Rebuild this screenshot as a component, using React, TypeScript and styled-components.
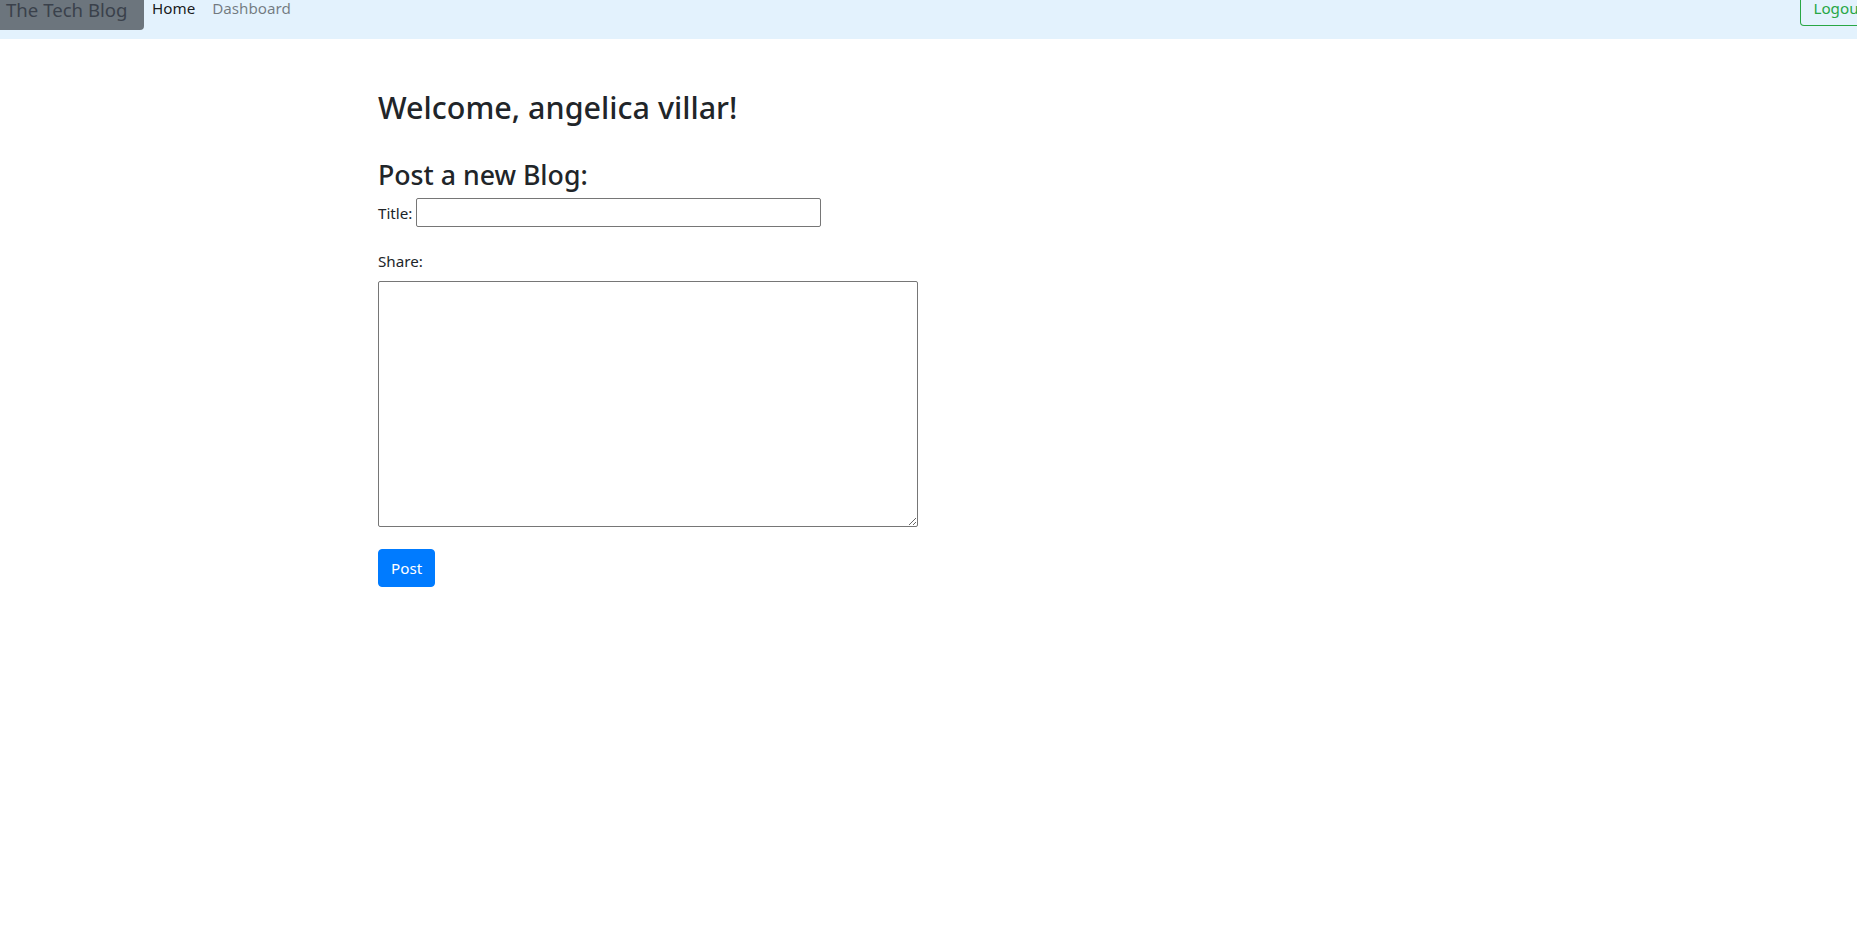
import React from "react";
import styled, { createGlobalStyle } from "styled-components";

const Global = createGlobalStyle`
  html, body { margin: 0; padding: 0; background: #ffffff; }
  body {
    font-family: "Segoe UI", "Noto Sans", "Liberation Sans", sans-serif;
    font-size: 15.2px;
    color: #212529;
    overflow: hidden;
  }
`;

const NavBar = styled.nav`
  display: flex;
  align-items: flex-start;
  height: 39px;
  background: #e3f2fd;
  overflow: hidden;
`;

const Brand = styled.a`
  display: block;
  box-sizing: border-box;
  width: 144px;
  height: 30px;
  padding-left: 6px;
  background: #6c757d;
  color: #3a414b;
  font-size: 18.6px;
  line-height: 20px;
  border-bottom-right-radius: 4px;
  white-space: nowrap;
  text-decoration: none;
`;

const Links = styled.div`
  display: flex;
  gap: 17px;
  margin-left: 8px;
`;

const NavLink = styled.a<{ $active?: boolean }>`
  font-size: 15.2px;
  line-height: 16px;
  color: ${(p) => (p.$active ? "rgba(0,0,0,0.9)" : "rgba(0,0,0,0.5)")};
  text-decoration: none;
  white-space: nowrap;
`;

const Logout = styled.button`
  margin-left: auto;
  margin-right: -20px;
  box-sizing: border-box;
  height: 26px;
  padding: 0 12px;
  border: 1px solid #28a745;
  border-top: none;
  border-radius: 0 0 4px 4px;
  background: transparent;
  color: #28a745;
  font-family: inherit;
  font-size: 15.2px;
  line-height: 16px;
  display: flex;
  align-items: flex-start;
`;

const Main = styled.main`
  padding: 49px 0 0 378px;
`;

const Welcome = styled.h2`
  margin: 0;
  font-size: 30.5px;
  font-weight: 500;
  line-height: 38px;
`;

const SubHeading = styled.h3`
  margin: 33px 0 0;
  font-size: 26.7px;
  font-weight: 500;
  line-height: 32px;
`;

const Form = styled.form`
  display: flex;
  flex-direction: column;
  align-items: flex-start;
`;

const Row = styled.div`
  display: flex;
  align-items: center;
  gap: 4px;
  margin-top: 7px;
`;

const Label = styled.label`
  font-size: 15.2px;
  line-height: 24px;
`;

const TitleInput = styled.input`
  box-sizing: border-box;
  width: 405px;
  height: 29px;
  border: 1px solid #767676;
  border-radius: 2px;
  padding: 1px 2px;
  font-family: inherit;
  font-size: 15.2px;
`;

const ShareLabel = styled(Label)`
  display: block;
  margin-top: 22px;
`;

const TextArea = styled.textarea`
  box-sizing: border-box;
  width: 540px;
  height: 246px;
  margin-top: 8px;
  border: 1px solid #767676;
  border-radius: 2px;
  font-family: inherit;
  font-size: 15.2px;
`;

const PostButton = styled.button`
  box-sizing: border-box;
  margin-top: 22px;
  min-width: 56px;
  height: 38px;
  padding: 0 12px;
  border: 1px solid #007bff;
  border-radius: 4px;
  background: #007bff;
  color: #ffffff;
  font-family: inherit;
  font-size: 15.2px;
  line-height: 24px;
  text-align: center;
`;

export default function App() {
  return (
    <>
      <Global />
      <NavBar>
        <Brand href="#">The Tech Blog</Brand>
        <Links>
          <NavLink href="#" $active>
            Home
          </NavLink>
          <NavLink href="#">Dashboard</NavLink>
        </Links>
        <Logout type="button">Logout</Logout>
      </NavBar>
      <Main>
        <Welcome>Welcome, angelica villar!</Welcome>
        <SubHeading>Post a new Blog:</SubHeading>
        <Form onSubmit={(e) => e.preventDefault()}>
          <Row>
            <Label htmlFor="title">Title:</Label>
            <TitleInput id="title" type="text" />
          </Row>
          <ShareLabel htmlFor="share">Share:</ShareLabel>
          <TextArea id="share" />
          <PostButton type="submit">Post</PostButton>
        </Form>
      </Main>
    </>
  );
}
